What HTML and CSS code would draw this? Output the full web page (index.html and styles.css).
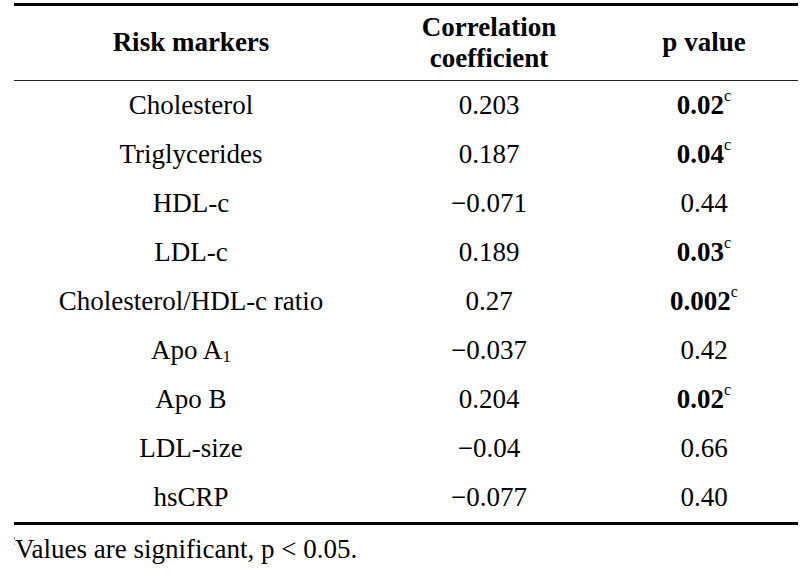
FILE: index.html
```html
<!DOCTYPE html>
<html>
<head>
<meta charset="utf-8">
<link rel="stylesheet" href="styles.css">
</head>
<body>
<table class="data">
  <colgroup>
    <col class="c1"><col class="c2"><col class="c3">
  </colgroup>
  <thead>
    <tr>
      <th>Risk markers</th>
      <th>Correlation<br>coefficient</th>
      <th>p value</th>
    </tr>
  </thead>
  <tbody>
    <tr><td>Cholesterol</td><td>0.203</td><td><b>0.02</b><sup class="note">c</sup></td></tr>
    <tr><td>Triglycerides</td><td>0.187</td><td><b>0.04</b><sup class="note">c</sup></td></tr>
    <tr><td>HDL-c</td><td>−0.071</td><td>0.44</td></tr>
    <tr><td>LDL-c</td><td>0.189</td><td><b>0.03</b><sup class="note">c</sup></td></tr>
    <tr><td>Cholesterol/HDL-c ratio</td><td>0.27</td><td><b>0.002</b><sup class="note">c</sup></td></tr>
    <tr><td>Apo A<sub class="idx">1</sub></td><td>−0.037</td><td>0.42</td></tr>
    <tr><td>Apo B</td><td>0.204</td><td><b>0.02</b><sup class="note">c</sup></td></tr>
    <tr><td>LDL-size</td><td>−0.04</td><td>0.66</td></tr>
    <tr><td>hsCRP</td><td>−0.077</td><td>0.40</td></tr>
  </tbody>
</table>
<p class="foot"><sup class="note">c</sup>Values are significant, p &lt; 0.05.</p>
</body>
</html>
```

FILE: styles.css
```css
html, body {
  background: #ffffff;
}
body {
  margin: 3px 0 0 14px;
  font-family: "Liberation Serif", "Times New Roman", serif;
  font-size: 27px;
  color: #000;
}
.data {
  width: 784px;
  border-collapse: separate;
  border-spacing: 0;
  table-layout: fixed;
}
.c1 { width: 354px; }
.c2 { width: 242px; }
.c3 { width: 188px; }
.data th {
  font-weight: bold;
  line-height: 31.5px;
  padding: 5.5px 0;
  text-align: center;
  vertical-align: middle;
  border-top: 3px solid #000;
  border-bottom: 1px solid #222;
}
.data td {
  height: 49px;
  padding: 0;
  line-height: 31px;
  text-align: center;
  vertical-align: middle;
}
.data tbody tr:last-child td {
  border-bottom: 3px solid #000;
}
.data b {
  font-weight: bold;
}
.note {
  font-size: 16px;
  font-weight: normal;
  line-height: 0;
  vertical-align: 13px;
}
.idx {
  font-size: 17px;
  line-height: 0;
  vertical-align: -3px;
}
.foot {
  margin: 9px 0 0 -6px;
  line-height: 31.5px;
}
```
